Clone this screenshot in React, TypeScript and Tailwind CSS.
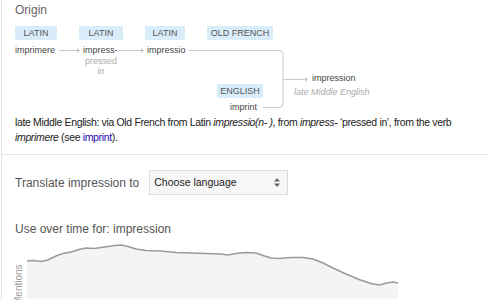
import React from "react";

const font = { fontFamily: '"Liberation Sans", Arial, sans-serif' };

type Tag = { label: string; left: number; width: number; top: number };

const tags: Tag[] = [
  { label: "LATIN", left: 14, width: 42, top: 2 },
  { label: "LATIN", left: 78, width: 44, top: 2 },
  { label: "LATIN", left: 144, width: 40, top: 2 },
  { label: "OLD FRENCH", left: 206, width: 66, top: 2 },
  { label: "ENGLISH", left: 216, width: 46, top: 60 },
];

const words = [
  { text: "imprimere", left: 14, top: 20 },
  { text: "impress-", left: 82, top: 20 },
  { text: "impressio", left: 146, top: 20 },
  { text: "imprint", left: 229, top: 77 },
  { text: "impression", left: 311, top: 48 },
];

// usage curve, x from 26 to 397, y in page coords
const curve: [number, number][] = [
  [26, 262], [33, 261.5], [40, 262.5], [47, 261], [55, 257], [62, 254.5],
  [70, 253], [78, 250.5], [85, 249], [93, 249.5], [100, 248.5], [107, 247.5],
  [114, 246.5], [120, 246], [127, 247.5], [135, 250], [145, 251.5], [160, 252],
  [175, 253.5], [190, 254], [205, 254.5], [220, 255], [227, 256], [235, 254.5],
  [245, 253.5], [255, 254], [262, 256.5], [270, 259], [278, 259.5], [290, 258.5],
  [302, 258.5], [312, 260], [322, 264], [332, 269], [345, 275], [358, 280.5],
  [370, 284.5], [378, 286], [386, 284], [392, 283], [397, 284],
];

function Chart() {
  const line = curve.map(([x, y], i) => `${i ? "L" : "M"}${x} ${y - 240}`).join(" ");
  const area = `${line} L397 60 L26 60 Z`;
  return (
    <svg width="488" height="60" viewBox="0 0 488 60" className="block">
      <path d={area} fill="#f4f4f4" />
      <path d={line} fill="none" stroke="#9a9a9a" strokeWidth="1.6" />
    </svg>
  );
}

function Arrow({ x1, x2, y }: { x1: number; x2: number; y: number }) {
  return (
    <g>
      <line x1={x1} y1={y} x2={x2} y2={y} stroke="#c8c8c8" strokeWidth="1" />
      <path d={`M${x2 - 3} ${y - 2.5} L${x2} ${y} L${x2 - 3} ${y + 2.5} Z`} fill="#c8c8c8" />
    </g>
  );
}

export default function App() {
  return (
    <div className="w-[488px] h-[300px] overflow-hidden bg-white" style={font}>
      <div className="ml-px h-full border-l border-[#e5e5e5]">
        <div className="pl-[13px] pt-[3px] text-[12px] leading-[14px] text-[#666]">Origin</div>

        <div className="relative h-[91px] mt-[7px]">
          <svg width="488" height="93" className="absolute left-[-1px] top-0">
            <Arrow x1={58} x2={79} y={26.5} />
            <Arrow x1={118} x2={143} y={26.5} />
            <path d="M187 26.5 H278 Q282 26.5 282 30.5 V79.5 Q282 83.5 278 83.5 H262" fill="none" stroke="#c8c8c8" strokeWidth="1" />
            <Arrow x1={282} x2={307} y={55.5} />
          </svg>

          {tags.map((t, i) => (
            <div
              key={i}
              className="absolute h-[14px] bg-[#d9ecfa] text-[9px] leading-[14px] text-[#555] text-center"
              style={{ left: t.left - 1, top: t.top, width: t.width }}
            >
              {t.label}
            </div>
          ))}

          {words.map((w, i) => (
            <div
              key={i}
              className="absolute text-[9px] leading-[12px] text-[#444]"
              style={{ left: w.left - 1, top: w.top }}
            >
              {w.text}
            </div>
          ))}

          <div className="absolute left-[81px] top-[32px] w-[36px] text-center text-[9px] leading-[10px] text-[#aaa]">
            pressed
            <br />
            in
          </div>
          <div className="absolute left-[292px] top-[62px] text-[9px] italic leading-[12px] text-[#aaa]">
            late Middle English
          </div>
        </div>

        <p className="pl-[13px] pr-[20px] text-[10.5px] leading-[15px] tracking-[-0.35px] text-[#222]">
          late Middle English: via Old French from Latin <i>impressio(n- )</i>, from <i>impress-</i> ‘pressed in’, from
          the verb <i>imprimere</i> (see <a className="text-[#1a0dab]">imprint</a>).
        </p>

        <div className="mt-[9px] border-t border-[#e5e5e5]" />

        <div className="flex items-center gap-[10px] pl-[13px] pt-[15px]">
          <span className="text-[12px] text-[#555]">Translate impression to</span>
          <div className="flex h-[25px] w-[139px] items-center justify-between border border-[#ddd] bg-[#f7f7f7] pl-[4px] pr-[7px] text-[10.5px] text-[#222]">
            <span>Choose language</span>
            <svg width="6" height="9" viewBox="0 0 6 9">
              <path d="M0 3.5 L3 0 L6 3.5 Z M0 5.5 L3 9 L6 5.5 Z" fill="#666" />
            </svg>
          </div>
        </div>

        <div className="pl-[13px] pt-[27px] text-[12px] leading-[14px] text-[#555]">Use over time for: impression</div>

        <div className="relative mt-[3px]">
          <div className="ml-[-1px]">
            <Chart />
          </div>
          <div className="absolute left-[11px] top-[22px] origin-top-left -rotate-90 translate-y-[44px] text-[10px] leading-[12px] text-[#999]">
            Mentions
          </div>
        </div>
      </div>
    </div>
  );
}
